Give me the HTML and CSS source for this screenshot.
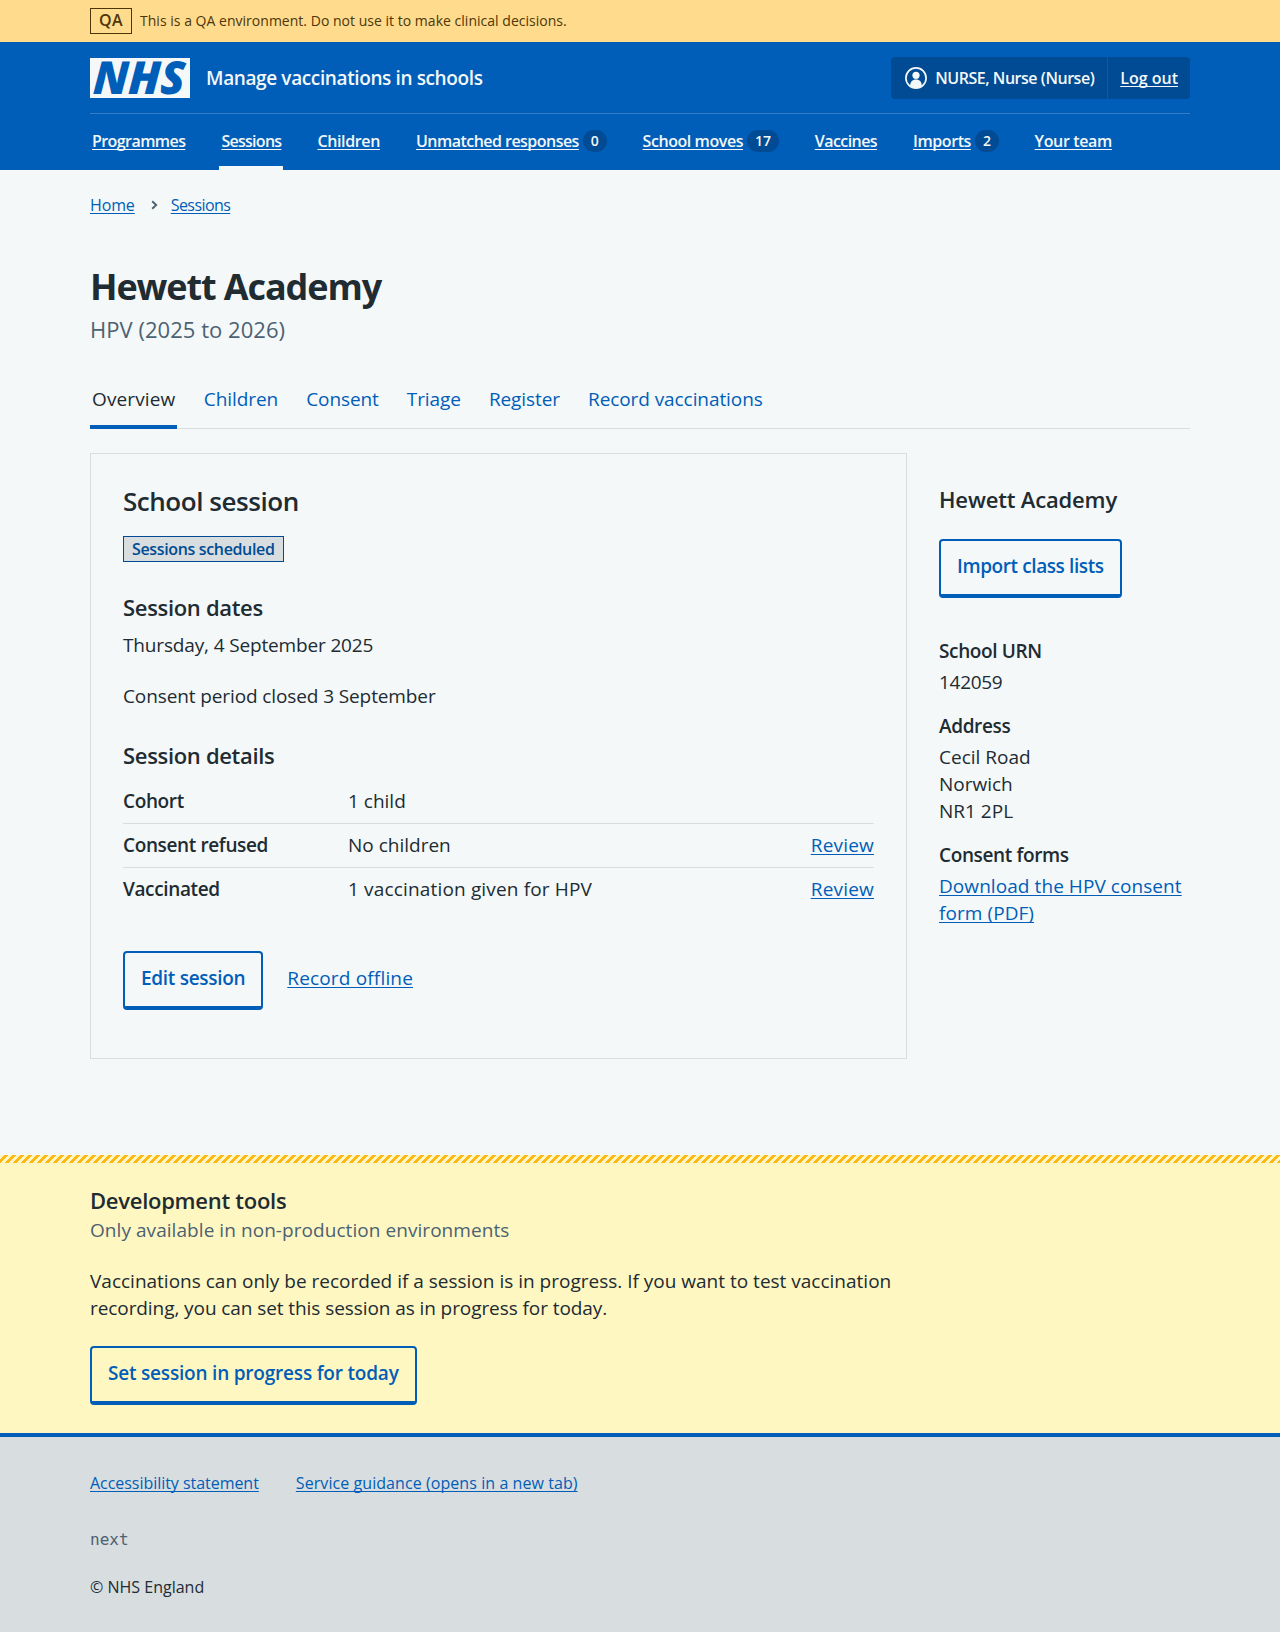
FILE: index.html
```html
<!DOCTYPE html>
<html lang="en">
<head>
<meta charset="utf-8">
<title>Hewett Academy – Manage vaccinations in schools</title>
<link rel="stylesheet" href="styles.css">
</head>
<body>
<div class="environment">
  <div class="container environment-inner">
    <strong class="environment-tag">QA</strong>
    <span>This is a QA environment. Do not use it to make clinical decisions.</span>
  </div>
</div>

<header class="header">
  <div class="container">
    <div class="header-top">
      <a class="service" href="#">
        <svg class="logo" width="100" height="40" viewBox="0 0 100 40" role="img" aria-label="NHS">
          <rect width="100" height="40" fill="#f4f8f9"/>
          <text class="logo-text" transform="translate(2.400 36) skewX(-3)" textLength="92" lengthAdjust="spacingAndGlyphs">NHS</text>
        </svg>
        <span class="service-name">Manage vaccinations in schools</span>
      </a>
      <div class="account">
        <div class="account-user">
          <svg width="24" height="24" viewBox="0 0 24 24" aria-hidden="true">
            <circle cx="12" cy="12" r="10.1" fill="none" stroke="#f4f8f9" stroke-width="1.7"/>
            <circle cx="12" cy="9.3" r="3.6" fill="#f4f8f9"/>
            <path d="M6.2 20c0-4.200 2-6.400 5.800-6.400s5.800 2.200 5.800 6.400c-1.600 1.400-3.600 2.200-5.800 2.200s-4.200-.8-5.800-2.200z" fill="#f4f8f9"/>
          </svg>
          <span>NURSE, Nurse (Nurse)</span>
        </div>
        <a class="account-logout" href="#">Log out</a>
      </div>
    </div>
    <nav>
      <ul class="nav">
        <li><a class="t-tight" href="#">Programmes</a></li>
        <li class="current"><a class="t-tighter" href="#">Sessions</a></li>
        <li><a class="t-close" href="#">Children</a></li>
        <li><a class="t-responses" href="#">Unmatched responses</a><span class="count">0</span></li>
        <li><a class="t-snug" href="#">School moves</a><span class="count">17</span></li>
        <li><a class="t-tight" href="#">Vaccines</a></li>
        <li><a class="t-snug" href="#">Imports</a><span class="count">2</span></li>
        <li><a class="t-close" href="#">Your team</a></li>
      </ul>
    </nav>
  </div>
</header>

<main class="container">
  <nav class="breadcrumb">
    <a class="t-home" href="#">Home</a>
    <svg width="7" height="10" viewBox="0 0 7 10" aria-hidden="true"><path d="M1.200 1.200 5.200 5 1.200 8.800" fill="none" stroke="#4c6272" stroke-width="1.900"/></svg>
    <a class="t-tight" href="#">Sessions</a>
  </nav>

  <h1>Hewett Academy</h1>
  <p class="caption">HPV (2025 to 2026)</p>

  <ul class="tabs">
    <li class="selected">Overview</li>
    <li><a href="#">Children</a></li>
    <li><a href="#">Consent</a></li>
    <li><a href="#">Triage</a></li>
    <li><a href="#">Register</a></li>
    <li><a href="#">Record vaccinations</a></li>
  </ul>

  <div class="columns">
    <section class="card">
      <h2>School session</h2>
      <strong class="tag">Sessions scheduled</strong>

      <h3>Session dates</h3>
      <p class="date">Thursday, 4 September 2025</p>
      <p class="consent">Consent period closed 3 September</p>

      <h3>Session details</h3>
      <dl class="summary">
        <div><dt>Cohort</dt><dd>1 child</dd></div>
        <div><dt>Consent refused</dt><dd>No children</dd><dd class="action"><a href="#">Review</a></dd></div>
        <div><dt>Vaccinated</dt><dd class="vaccinated">1 vaccination given for HPV</dd><dd class="action"><a href="#">Review</a></dd></div>
      </dl>
      <div class="actions">
        <a class="button button-edit" href="#">Edit session</a>
        <a class="offline" href="#">Record offline</a>
      </div>
    </section>

    <aside class="sidebar">
      <h3>Hewett Academy</h3>
      <a class="button" href="#">Import class lists</a>
      <dl>
        <dt>School URN</dt>
        <dd class="urn">142059</dd>
        <dt>Address</dt>
        <dd>Cecil Road<br>Norwich<br>NR1 2PL</dd>
        <dt>Consent forms</dt>
        <dd class="download"><a href="#">Download the HPV consent form (PDF)</a></dd>
      </dl>
    </aside>
  </div>
</main>

<section class="devtools">
  <div class="container">
    <h3>Development tools</h3>
    <p class="hint">Only available in non-production environments</p>
    <p class="explain">Vaccinations can only be recorded if a session is in progress. If you want to test vaccination <span class="explain-end">recording, you can set this session as in progress for today.</span></p>
    <a class="button button-wide" href="#">Set session in progress for today</a>
  </div>
</section>

<footer class="footer">
  <div class="container">
    <div class="footer-links">
      <a class="accessibility" href="#">Accessibility statement</a>
      <a class="guidance" href="#">Service guidance (opens in a new tab)</a>
    </div>
    <p class="version">next</p>
    <p class="copyright">© NHS England</p>
  </div>
</footer>
</body>
</html>
```
FILE: styles.css
```css
* {
  box-sizing: border-box;
}

body {
  margin: 0;
  min-height: 1632px;
  display: flex;
  flex-direction: column;
  background: #f4f8f9;
  color: #212b32;
  font: 400 19px/27px "Open Sans", "Noto Sans", sans-serif;
}

h1, h2, h3, p, ul, dl, dd {
  margin: 0;
  padding: 0;
}

ul {
  list-style: none;
}

a {
  color: #005eb8;
  text-decoration: underline;
  text-decoration-thickness: 1px;
  text-underline-offset: 2px;
  text-decoration-skip-ink: none;
}

.container {
  width: 1100px;
  margin: 0 auto;
}

h1, h2, h3, dt {
  font-weight: 600;
}

h1 {
  margin-top: 47px;
  font-size: 36px;
  font-weight: 700;
  line-height: 45px;
  letter-spacing: -1.1px;
}

h2 {
  font-size: 26px;
  line-height: 34px;
  letter-spacing: -0.45px;
}

h3 {
  font-size: 22px;
  line-height: 30px;
  letter-spacing: -0.32px;
}

dt {
  letter-spacing: -0.37px;
}

/* Letter fitting for the navigation labels */
.t-tighter { letter-spacing: -0.72px; }
.t-tight { letter-spacing: -0.57px; }
.t-responses { letter-spacing: -0.53px; }
.t-snug { letter-spacing: -0.43px; }
.t-close { letter-spacing: -0.37px; }
.t-home { letter-spacing: -0.13px; }

/* Environment banner */
.environment {
  background: #ffdb8e;
  color: #4d3708;
  font-size: 14px;
  line-height: 26px;
}

.environment-inner {
  display: flex;
  align-items: center;
  gap: 8px;
  height: 42px;
  letter-spacing: 0.02px;
}

.environment-tag {
  width: 42px;
  height: 26px;
  border: 1px solid #4d3708;
  font-size: 16px;
  font-weight: 600;
  line-height: 23px;
  letter-spacing: 0.5px;
  text-align: center;
}

/* Header */
.header {
  height: 128px;
  background: #005eb8;
  color: #f4f8f9;
}

.header a {
  color: #f4f8f9;
}

.header-top {
  display: flex;
  justify-content: space-between;
  align-items: center;
  height: 72px;
  border-bottom: 1px solid #337ec6;
}

.service {
  display: flex;
  align-items: center;
  gap: 16px;
  text-decoration: none;
}

.logo {
  overflow: visible;
}

.logo-text {
  font: italic 800 45.5px "Open Sans", sans-serif;
  fill: #005eb8;
}

.service-name {
  padding-top: 1px;
  font-weight: 600;
  letter-spacing: -0.38px;
}

.account {
  display: flex;
  height: 42px;
  border-radius: 4px;
  background: #004b93;
  font-size: 16px;
  font-weight: 600;
  line-height: 42px;
  letter-spacing: -0.47px;
}

.account-user {
  display: flex;
  align-items: center;
  gap: 7px;
  padding: 0 13px;
  border-right: 1px solid #005eb8;
}

.account-logout {
  padding: 0 12px;
  letter-spacing: 0;
}

.nav {
  display: flex;
  gap: 32px;
  font-size: 16px;
  font-weight: 600;
  line-height: 24px;
}

.nav li {
  display: flex;
  align-items: center;
  height: 56px;
  padding: 0 2px 2px;
}

.nav .current {
  border-bottom: 4px solid #f4f8f9;
  padding-top: 2px;
  padding-bottom: 0;
}

.count {
  min-width: 24px;
  margin: 0 -0.3px 0 4px;
  padding: 0 8px;
  border-radius: 12px;
  background: #004b93;
  font-size: 14px;
  line-height: 22px;
  text-align: center;
}

/* Page heading */
.breadcrumb {
  display: flex;
  align-items: center;
  margin-top: 23px;
  font-size: 16px;
  line-height: 24px;
}

.breadcrumb svg {
  margin: 0 13px 0 16px;
}

.caption {
  margin-top: 5px;
  color: #4c6272;
  font-size: 22px;
  line-height: 30px;
  letter-spacing: 0.04px;
}

.tabs {
  display: flex;
  gap: 24px;
  margin-top: 41px;
  box-shadow: inset 0 -1px #d8dde0;
}

.tabs li {
  height: 44px;
  padding: 1px 2px 0;
  letter-spacing: -0.08px;
}

.tabs li:first-child {
  margin-right: 0.5px;
  letter-spacing: 0.12px;
}

.tabs a {
  text-decoration: none;
}

.tabs .selected {
  border-bottom: 4px solid #005eb8;
}

/* Session card and sidebar */
.columns {
  display: grid;
  grid-template-columns: 817px 251px;
  gap: 32px;
  margin-top: 24px;
}

.card {
  padding: 30px 32px 48px;
  border: 1px solid #d8dde0;
}

.tag {
  display: block;
  width: max-content;
  margin: 18px 0 30px;
  padding: 0 8px;
  border: 1px solid #004b93;
  background: #d8dde0;
  color: #004b93;
  font-size: 16px;
  font-weight: 600;
  line-height: 24px;
  letter-spacing: -0.35px;
}

.date {
  margin-top: 10px;
  letter-spacing: -0.15px;
}

.consent {
  margin: 24px 0 30px;
  letter-spacing: -0.11px;
}

.summary {
  margin-top: 11px;
}

.summary div {
  display: grid;
  grid-template-columns: 225px 1fr auto;
  padding: 7px 0 8px;
  border-bottom: 1px solid #d8dde0;
}

.summary div + div {
  padding-top: 8px;
}

.summary div:last-child {
  border-bottom-color: transparent;
}

.summary .vaccinated {
  letter-spacing: 0.16px;
}

.summary .action {
  letter-spacing: 0.2px;
}

.actions {
  display: flex;
  gap: 24px;
  margin-top: 39px;
}

.offline {
  padding-top: 14px;
  letter-spacing: 0.17px;
}

.button {
  display: block;
  width: max-content;
  padding: 12px 16px 14px;
  border: 2px solid #005eb8;
  border-bottom-width: 4px;
  border-radius: 4px;
  font-weight: 600;
  letter-spacing: -0.4px;
  text-decoration: none;
}

.button-edit {
  letter-spacing: -0.3px;
}

.button-wide {
  letter-spacing: -0.2px;
}

.sidebar {
  padding-top: 31px;
}

.sidebar h3 {
  letter-spacing: -0.16px;
}

.sidebar .button {
  margin: 25px 0 40px;
}

.sidebar dd {
  margin: 4px 0 17px;
}

.sidebar .urn {
  letter-spacing: -0.3px;
}

.sidebar .download {
  letter-spacing: 0.07px;
}

/* Development tools */
.devtools {
  margin-top: 96px;
  padding-bottom: 28px;
  background: #fff7c2;
}

.devtools::before {
  content: "";
  display: block;
  height: 8px;
  margin-bottom: 22px;
  background: repeating-linear-gradient(135deg, #fff7c2 0 2.83px, #ffb81c 2.83px 5.657px);
}

.devtools h3 {
  letter-spacing: -0.27px;
}

.hint {
  margin-top: 2px;
  color: #4c6272;
  letter-spacing: 0.06px;
}

.explain {
  width: 810px;
  margin: 24px 0;
}

.explain-end {
  letter-spacing: -0.08px;
}

/* Footer */
.footer {
  flex: 1;
  padding-top: 34px;
  border-top: 4px solid #005eb8;
  background: #d8dde0;
  font-size: 16px;
  line-height: 24px;
}

.footer-links {
  display: flex;
  gap: 37px;
}

.accessibility {
  letter-spacing: -0.04px;
}

.guidance {
  letter-spacing: 0.07px;
}

.version {
  margin-top: 33px;
  color: #4c6272;
  font-family: "DejaVu Sans Mono", monospace;
  font-size: 16px;
}

.copyright {
  margin-top: 23px;
}
```
